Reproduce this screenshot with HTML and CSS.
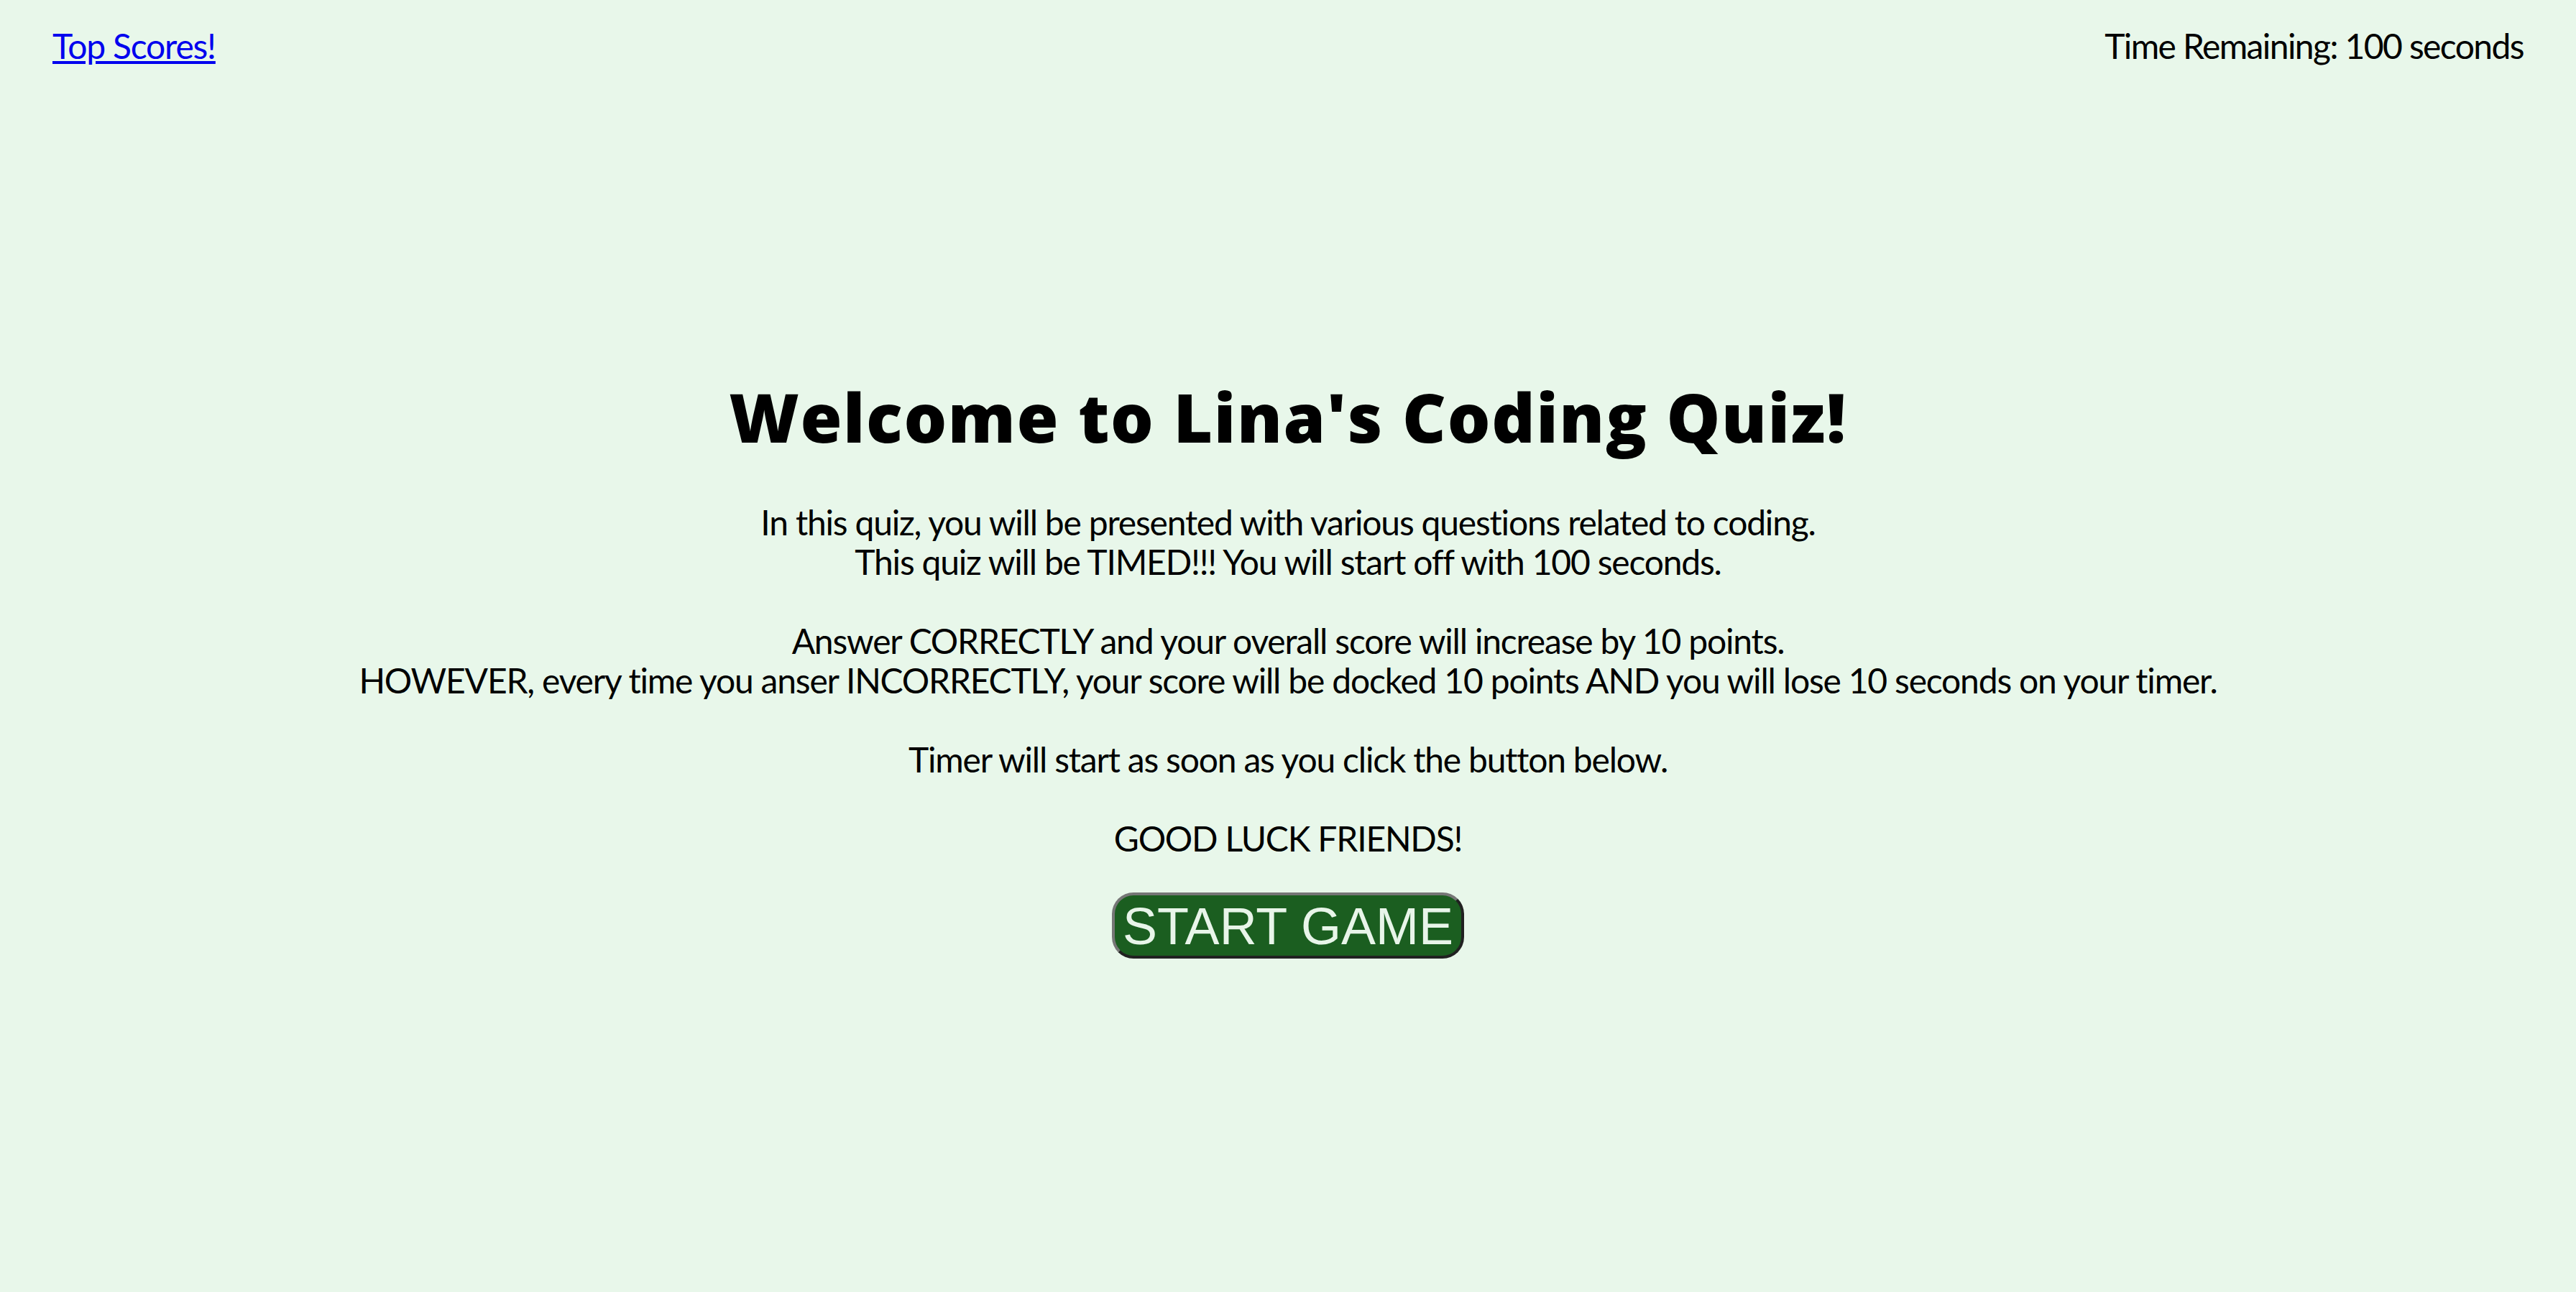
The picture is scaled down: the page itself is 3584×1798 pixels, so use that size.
FILE: index.html
```html
<!DOCTYPE html>
<html lang="en">
<head>
<meta charset="utf-8">
<title>Coding Quiz</title>
<link rel="stylesheet" href="styles.css">
</head>
<body>
<header class="top-bar">
  <a class="scores-link" href="#">Top Scores!</a>
  <div class="timer">Time Remaining: 100 seconds</div>
</header>
<main class="intro">
  <h1 class="title">Welcome to Lina's Coding Quiz!</h1>
  <p class="rules">In this quiz, you will be presented with various questions related to coding.<br>This quiz will be TIMED!!! You will start off with 100 seconds.<br><br>Answer CORRECTLY and your overall score will increase by 10 points.<br>HOWEVER, every time you anser INCORRECTLY, your score will be docked 10 points AND you will lose 10 seconds on your timer.<br><br>Timer will start as soon as you click the button below.<br><br>GOOD LUCK FRIENDS!</p>
  <button class="start-btn" type="button">START GAME</button>
</main>
</body>
</html>
```
FILE: styles.css
```css
html, body {
  margin: 0;
  padding: 0;
}
body {
  background: #e8f7ea;
  color: #000;
  font-family: "Lato", "Open Sans", sans-serif;
  font-size: 48px;
  line-height: 55px;
  letter-spacing: -1.2px;
  min-height: 1798px;
}
.top-bar {
  display: flex;
  justify-content: space-between;
  align-items: center;
  padding: 36px 73px 0 73px;
}
.scores-link {
  color: #0000ee;
  text-decoration: underline;
}
.timer {
  letter-spacing: -1.6px;
}
.intro {
  display: flex;
  flex-direction: column;
  align-items: center;
  text-align: center;
  padding-top: 434px;
}
.title {
  font-family: "Open Sans", "Lato", sans-serif;
  font-size: 94px;
  line-height: 110px;
  font-weight: 800;
  letter-spacing: 1.6px;
  margin: 0 0 64px 0;
}
.rules {
  margin: 0 0 48px 0;
}
.start-btn {
  font-family: "Liberation Sans", Arial, sans-serif;
  font-size: 72px;
  line-height: 83px;
  letter-spacing: 0;
  color: #e8f5e9;
  background: #1b5e20;
  border: 4px outset #767676;
  border-radius: 30px;
  padding: 2px 8px 0 8px;
  width: 490px;
  height: 92px;
}
```
